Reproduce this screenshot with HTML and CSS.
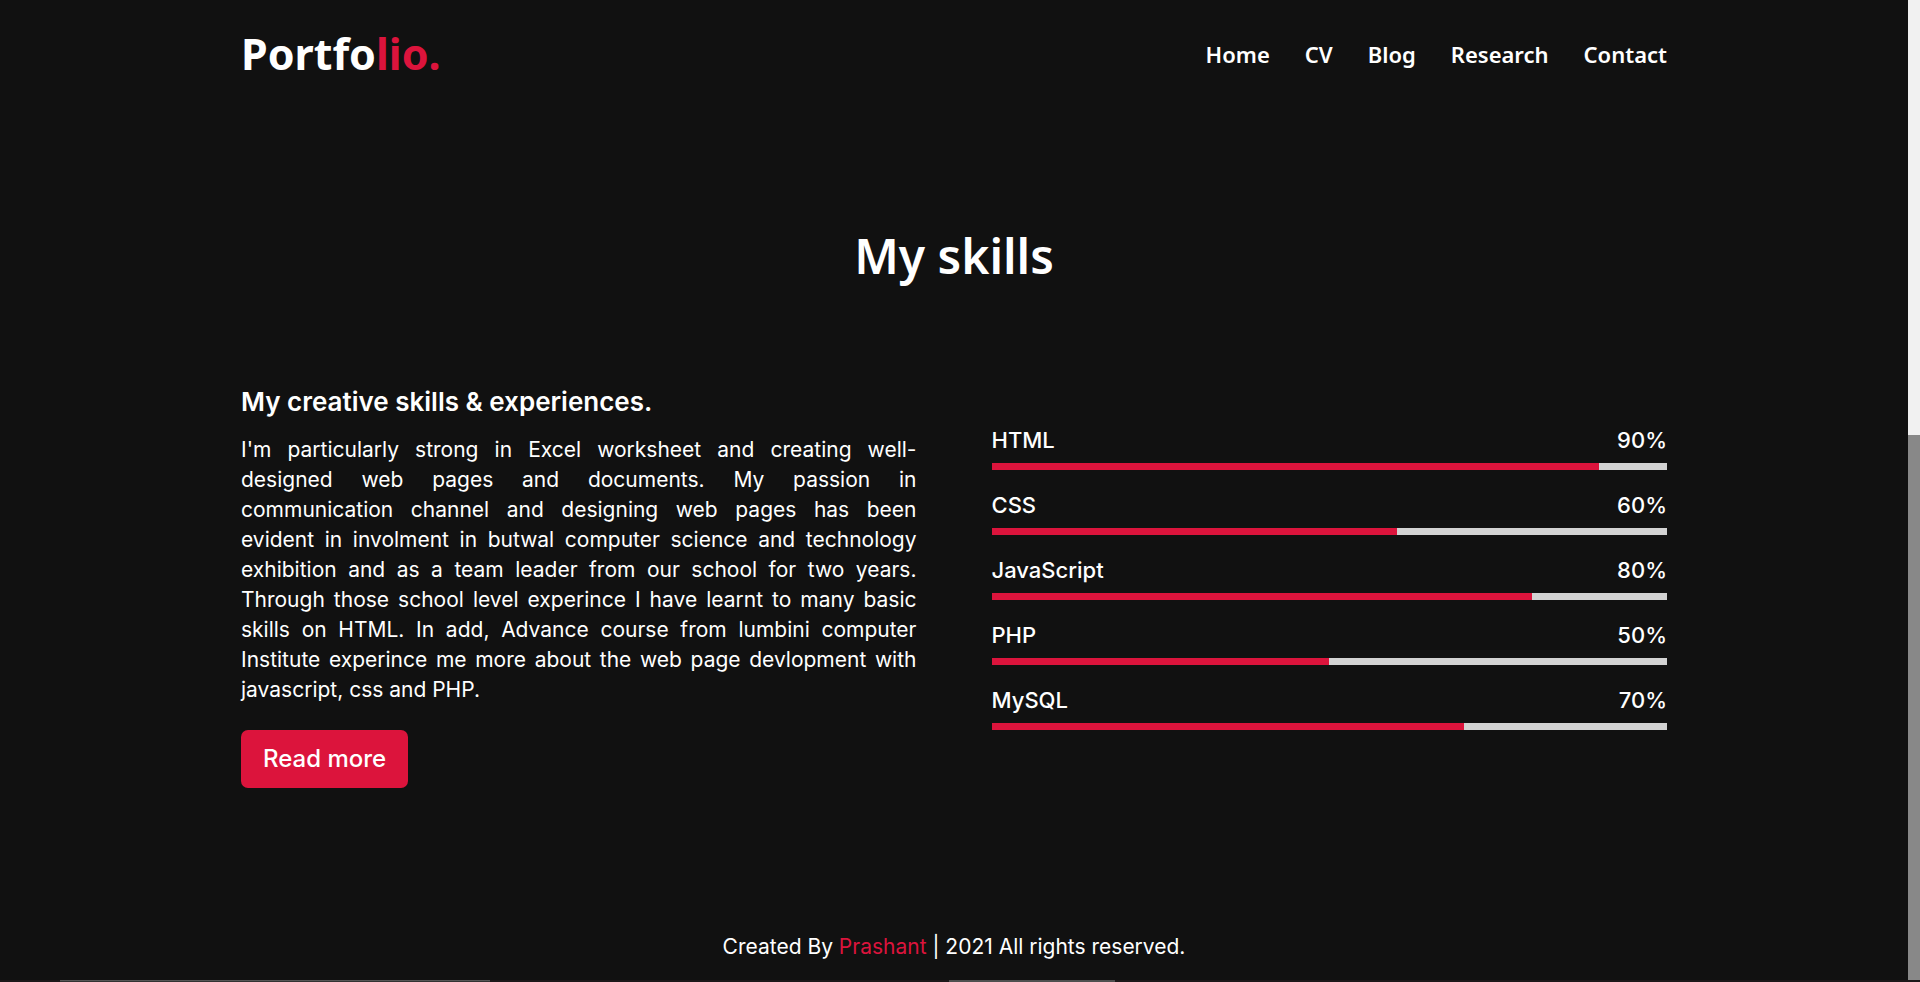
FILE: index.html
```html
<!DOCTYPE html>
<html lang="en">
<head>
<meta charset="utf-8">
<meta name="viewport" content="width=device-width, initial-scale=1">
<title>Portfolio</title>
<link rel="stylesheet" href="styles.css">
</head>
<body class="window">
<div class="page">
  <header class="navbar">
    <a class="logo" href="#">Portfo<span class="accent">lio.</span></a>
    <nav>
      <ul class="menu">
        <li><a href="#home">Home</a></li>
        <li><a href="#cv">CV</a></li>
        <li><a href="#blog">Blog</a></li>
        <li><a href="#research">Research</a></li>
        <li><a href="#contact">Contact</a></li>
      </ul>
    </nav>
  </header>
  <main class="skills">
    <h1 class="title">My skills</h1>
    <div class="columns">
      <section class="about">
        <h2 class="subtitle">My creative skills &amp; experiences.</h2>
        <p class="text">
          <span class="line">I'm particularly strong in Excel worksheet and creating well-</span>
          <span class="line">designed web pages and documents. My passion in</span>
          <span class="line">communication channel and designing web pages has been</span>
          <span class="line">evident in involment in butwal computer science and technology</span>
          <span class="line">exhibition and as a team leader from our school for two years.</span>
          <span class="line">Through those school level experince I have learnt to many basic</span>
          <span class="line">skills on HTML. In add, Advance course from lumbini computer</span>
          <span class="line">Institute experince me more about the web page devlopment with</span>
          <span class="line last">javascript, css and PHP.</span>
        </p>
        <a class="button" href="#more">Read more</a>
      </section>
      <section class="bars" aria-label="Skill levels">
        <div class="skill"><div class="info"><span>HTML</span><span>90%</span></div><div class="track"><div class="fill" style="width:90%"></div></div></div>
        <div class="skill"><div class="info"><span>CSS</span><span>60%</span></div><div class="track"><div class="fill" style="width:60%"></div></div></div>
        <div class="skill"><div class="info"><span>JavaScript</span><span>80%</span></div><div class="track"><div class="fill" style="width:80%"></div></div></div>
        <div class="skill"><div class="info"><span>PHP</span><span>50%</span></div><div class="track"><div class="fill" style="width:50%"></div></div></div>
        <div class="skill"><div class="info"><span>MySQL</span><span>70%</span></div><div class="track"><div class="fill" style="width:70%"></div></div></div>
      </section>
    </div>
  </main>
  <footer class="footer">Created By <a class="author" href="#author">Prashant</a> | 2021 All rights reserved.</footer>
</div>
<div class="scrollbar" aria-hidden="true"><div class="thumb"></div></div>
<div class="edge" aria-hidden="true"><i class="pane pane-dark"></i><i class="pane pane-light"></i></div>
</body>
</html>
```
FILE: styles.css
```css
* {
  box-sizing: border-box;
  margin: 0;
  padding: 0;
}

.window {
  display: grid;
  grid-template-columns: 1fr 12px;
  grid-template-rows: 1fr 2px;
  min-height: 100vh;
  background: #111;
  color: #fff;
  font-family: Inter, "Noto Sans", sans-serif;
  font-size: 21px;
  line-height: 30px;
}

a {
  color: inherit;
  text-decoration: none;
}

.page {
  display: flex;
  flex-direction: column;
  padding: 0 calc(100% * 241 / 1908);
}

.navbar {
  display: flex;
  justify-content: space-between;
  align-items: center;
  height: 107px;
  font-family: "Noto Sans", sans-serif;
}

.logo {
  font-size: 43px;
  font-weight: 700;
  line-height: 60px;
}

.accent {
  color: crimson;
}

.menu {
  display: flex;
  gap: 35px;
  list-style: none;
  font-size: 22px;
  font-weight: 600;
}

.skills {
  flex: 1;
  padding-top: 114px;
}

.title {
  font-family: "Noto Sans", sans-serif;
  font-size: 48px;
  font-weight: 600;
  line-height: 70px;
  text-align: center;
}

.columns {
  display: grid;
  grid-template-columns: 1fr 1fr;
  gap: 75px;
  align-items: center;
  margin-top: 93px;
}

.subtitle {
  font-size: 26px;
  font-weight: 600;
  line-height: 36px;
}

.text {
  margin: 15px 0 25px;
}

.line {
  display: block;
  text-align: justify;
  text-align-last: justify;
}

.last {
  text-align-last: left;
}

.button {
  display: inline-block;
  padding: 14px 22px;
  border-radius: 7px;
  background: crimson;
  font-size: 24px;
  font-weight: 500;
}

.bars {
  display: grid;
  gap: 20px;
  padding-bottom: 18px;
}

.info {
  display: flex;
  justify-content: space-between;
  margin-bottom: 8px;
  font-size: 22px;
  font-weight: 500;
}

.track {
  height: 7px;
  background: lightgray;
}

.fill {
  height: 100%;
  background: crimson;
}

.footer {
  padding-bottom: 18px;
  text-align: center;
}

.author {
  color: crimson;
}

.scrollbar {
  background: #f1f1f1;
  display: flex;
  flex-direction: column;
  justify-content: flex-end;
}

.thumb {
  height: 55.6%;
  background: #888;
}

.edge {
  grid-column: 1 / -1;
  display: grid;
  grid-template-columns: 60fr 430fr 459fr 166fr 805fr;
  background: #1c1819;
}

.pane-dark {
  grid-column: 2;
  background: #333;
  border-top: 1px solid #555;
}

.pane-light {
  grid-column: 4;
  background: #4f4f4f;
}
```
